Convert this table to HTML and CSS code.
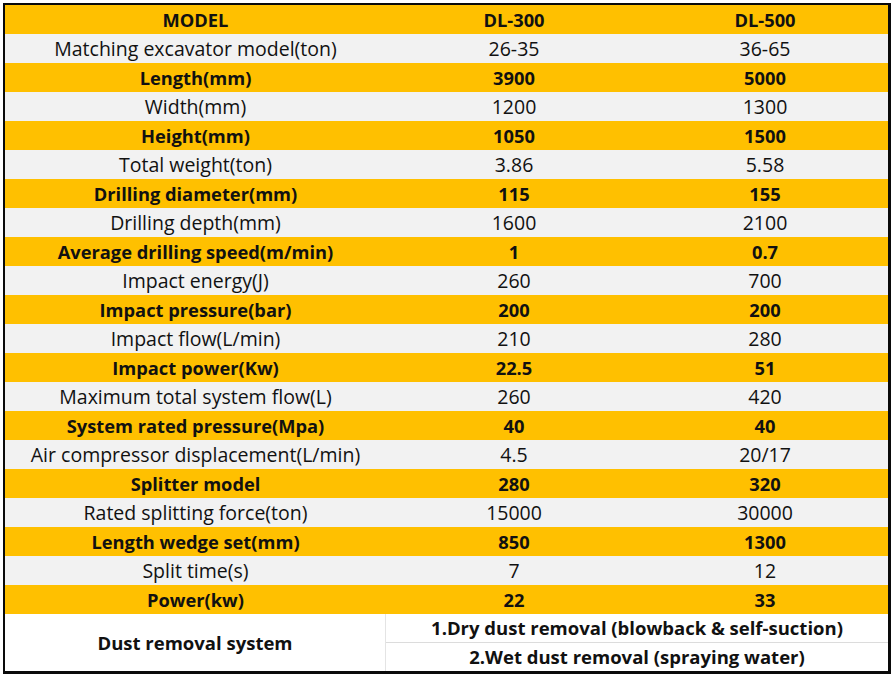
FILE: index.html
```html
<!DOCTYPE html>
<html>
<head>
<meta charset="utf-8">
<link rel="stylesheet" href="styles.css">
</head>
<body>
<table class="spec">
  <colgroup><col class="c1"><col class="c2"><col class="c3"></colgroup>
  <tr class="hi"><td>MODEL</td><td>DL-300</td><td>DL-500</td></tr>
  <tr class="lo"><td>Matching excavator model(ton)</td><td>26-35</td><td>36-65</td></tr>
  <tr class="hi"><td>Length(mm)</td><td>3900</td><td>5000</td></tr>
  <tr class="lo"><td>Width(mm)</td><td>1200</td><td>1300</td></tr>
  <tr class="hi"><td>Height(mm)</td><td>1050</td><td>1500</td></tr>
  <tr class="lo"><td>Total weight(ton)</td><td>3.86</td><td>5.58</td></tr>
  <tr class="hi"><td>Drilling diameter(mm)</td><td>115</td><td>155</td></tr>
  <tr class="lo"><td>Drilling depth(mm)</td><td>1600</td><td>2100</td></tr>
  <tr class="hi"><td>Average drilling speed(m/min)</td><td>1</td><td>0.7</td></tr>
  <tr class="lo"><td>Impact energy(J)</td><td>260</td><td>700</td></tr>
  <tr class="hi"><td>Impact pressure(bar)</td><td>200</td><td>200</td></tr>
  <tr class="lo"><td>Impact flow(L/min)</td><td>210</td><td>280</td></tr>
  <tr class="hi"><td>Impact power(Kw)</td><td>22.5</td><td>51</td></tr>
  <tr class="lo"><td>Maximum total system flow(L)</td><td>260</td><td>420</td></tr>
  <tr class="hi"><td>System rated pressure(Mpa)</td><td>40</td><td>40</td></tr>
  <tr class="lo"><td>Air compressor displacement(L/min)</td><td>4.5</td><td>20/17</td></tr>
  <tr class="hi"><td>Splitter model</td><td>280</td><td>320</td></tr>
  <tr class="lo"><td>Rated splitting force(ton)</td><td>15000</td><td>30000</td></tr>
  <tr class="hi"><td>Length wedge set(mm)</td><td>850</td><td>1300</td></tr>
  <tr class="lo"><td>Split time(s)</td><td>7</td><td>12</td></tr>
  <tr class="hi"><td>Power(kw)</td><td>22</td><td>33</td></tr>
  <tr class="dust"><td rowspan="2" class="dust-label">Dust removal system</td><td colspan="2" class="dust-a">1.Dry dust removal (blowback &amp; self-suction)</td></tr>
  <tr class="dust"><td colspan="2" class="dust-b">2.Wet dust removal (spraying water)</td></tr>
</table>
</body>
</html>
```
FILE: styles.css
```css
html, body {
  margin: 0;
  padding: 0;
  background: #ffffff;
}
body {
  padding: 3px 0 0 3px;
}
.spec {
  width: 888px;
  border: 2px solid #0a0a0a;
  border-width: 2px 3px 3px 2px;
  border-collapse: separate;
  border-spacing: 0;
  table-layout: fixed;
  font-family: "Open Sans", "Liberation Sans", sans-serif;
  font-size: 19.5px;
  color: #111111;
}
.c1 { width: 381px; }
.c2 { width: 256px; }
.c3 { width: 246px; }
.spec td {
  height: 29px;
  padding: 0;
  text-align: center;
  vertical-align: middle;
  white-space: nowrap;
  line-height: 22px;
}
.hi td {
  background: #ffc000;
  font-weight: 700;
  font-size: 18.3px;
}
.lo td {
  background: #f2f2f2;
}
.dust td {
  background: #ffffff;
  font-weight: 700;
  font-size: 18.5px;
  height: 28px;
}
.dust-label {
  border-right: 1px solid #e4e4e4;
}
.dust-a {
  border-bottom: 1px solid #dcdcdc;
}
```
